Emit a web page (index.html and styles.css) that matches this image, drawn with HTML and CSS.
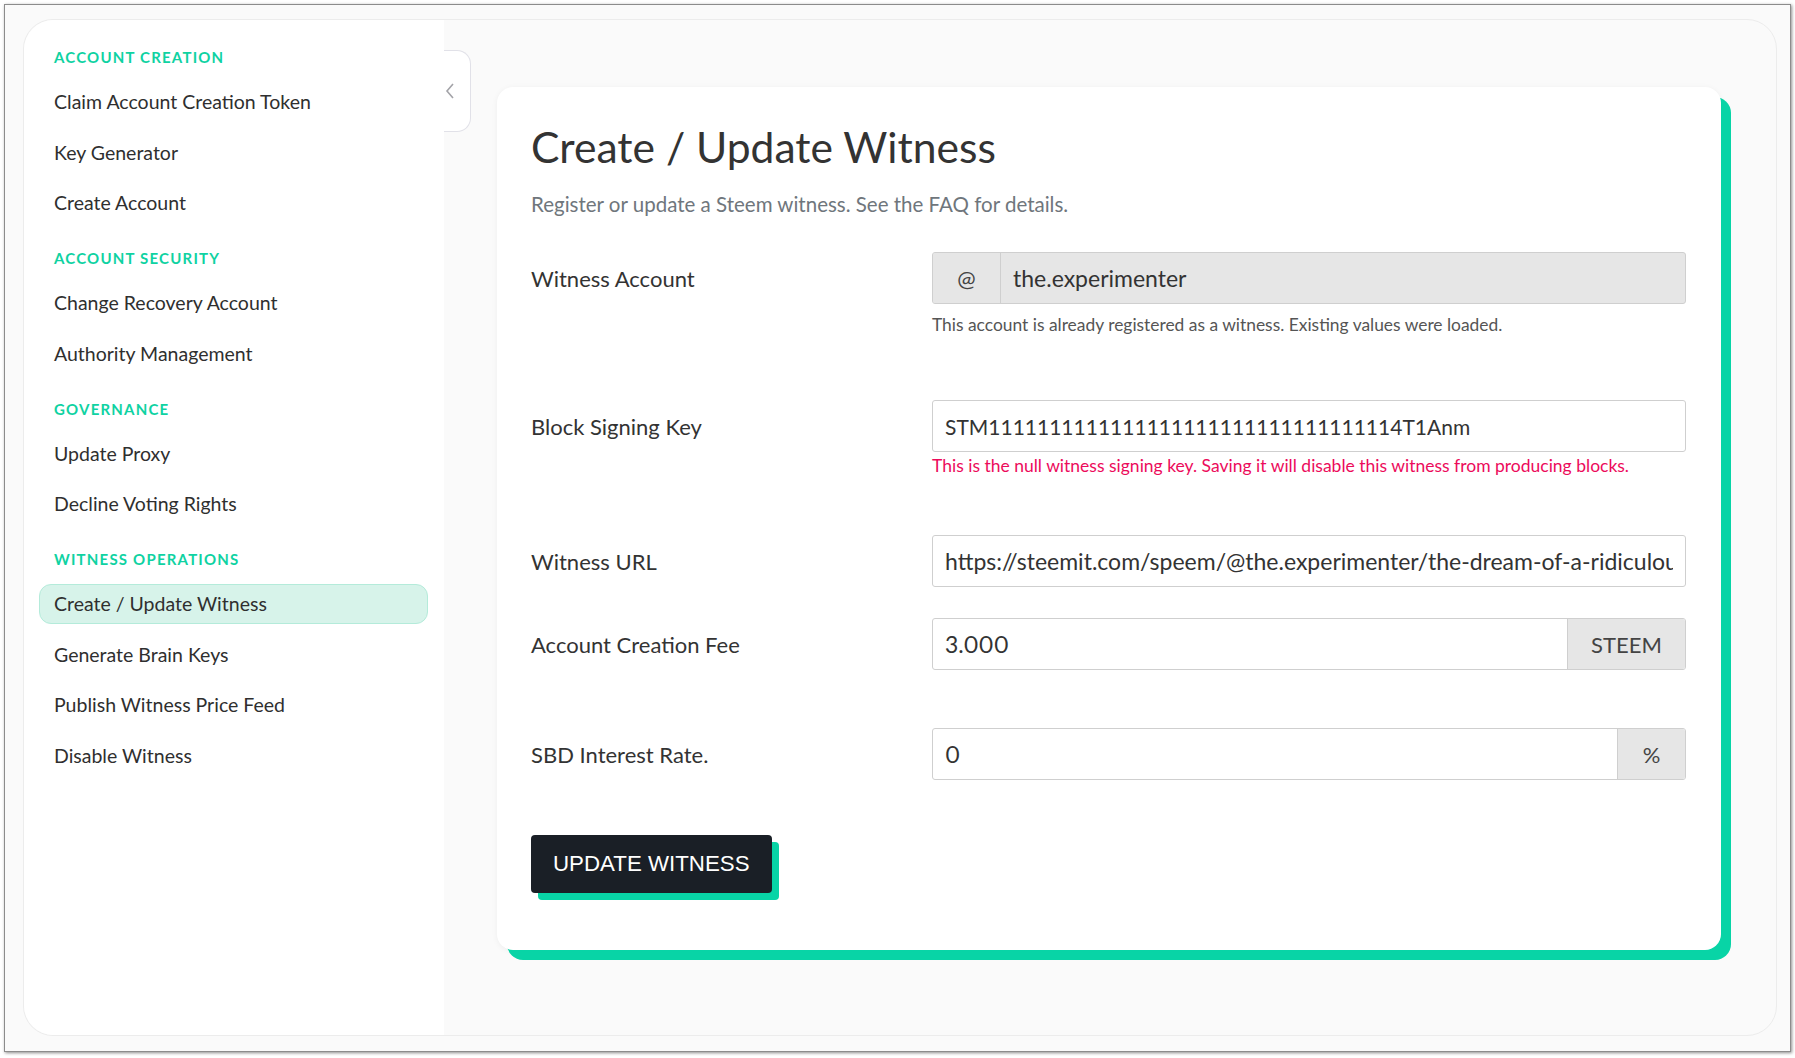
FILE: index.html
```html
<!DOCTYPE html>
<html lang="en">
<head>
    <meta charset="UTF-8">
    <meta name="viewport" content="width=device-width, initial-scale=1.0">
    <title>Create / Update Witness</title>
    <link rel="stylesheet" href="styles.css">
</head>
<body>
    <div class="frame">
        <div class="panel">
            <aside class="sidebar">
                <div class="nav-group">
                    <h4>Account Creation</h4>
                    <a href="#">Claim Account Creation Token</a>
                    <a href="#">Key Generator</a>
                    <a href="#">Create Account</a>
                </div>
                <div class="nav-group">
                    <h4>Account Security</h4>
                    <a href="#">Change Recovery Account</a>
                    <a href="#">Authority Management</a>
                </div>
                <div class="nav-group">
                    <h4>Governance</h4>
                    <a href="#">Update Proxy</a>
                    <a href="#">Decline Voting Rights</a>
                </div>
                <div class="nav-group">
                    <h4>Witness Operations</h4>
                    <a href="#" class="active">Create / Update Witness</a>
                    <a href="#">Generate Brain Keys</a>
                    <a href="#">Publish Witness Price Feed</a>
                    <a href="#">Disable Witness</a>
                </div>
                <button class="collapse" aria-label="Collapse sidebar">
                    <svg width="12" height="18" viewBox="0 0 12 18"><path d="M9 2 L3 9 L9 16" fill="none" stroke="#a3a3a8" stroke-width="1.6"/></svg>
                </button>
            </aside>

            <main class="main">
                <div class="card">
                    <h1>Create / Update Witness</h1>
                    <p class="lead">Register or update a Steem witness. See the FAQ for details.</p>

                    <div class="field">
                        <label>Witness Account</label>
                        <div class="input-group readonly">
                            <span class="addon">@</span>
                            <input type="text" value="the.experimenter" readonly>
                        </div>
                        <small class="hint">This account is already registered as a witness. Existing values were loaded.</small>
                    </div>

                    <div class="field">
                        <label>Block Signing Key</label>
                        <div class="input-group">
                            <input type="text" class="key" value="STM1111111111111111111111111111111114T1Anm">
                        </div>
                        <small class="hint error">This is the null witness signing key. Saving it will disable this witness from producing blocks.</small>
                    </div>

                    <div class="field tight">
                        <label>Witness URL</label>
                        <div class="input-group">
                            <input type="text" value="https://steemit.com/speem/@the.experimenter/the-dream-of-a-ridiculous-man">
                        </div>
                    </div>

                    <div class="field loose">
                        <label>Account Creation Fee</label>
                        <div class="input-group">
                            <input type="text" value="3.000">
                            <span class="addon addon-right wide">STEEM</span>
                        </div>
                    </div>

                    <div class="field">
                        <label>SBD Interest Rate.</label>
                        <div class="input-group">
                            <input type="text" value="0">
                            <span class="addon addon-right">%</span>
                        </div>
                    </div>

                    <button class="submit">UPDATE WITNESS</button>
                </div>
            </main>
        </div>
    </div>
</body>
</html>
```

FILE: styles.css
```css
* {
    margin: 0;
    padding: 0;
    box-sizing: border-box;
}

body {
    background: #fff;
    font-family: 'Lato', 'Open Sans', sans-serif;
    color: #333;
    overflow: hidden;
}

.frame {
    margin: 4px;
    height: 1048px;
    background: #fafafa;
    border: 1px solid #8c8c8c;
    box-shadow: 1px 1px 3px rgba(0, 0, 0, 0.45);
    padding: 14px 13px 15px 18px;
}

.panel {
    height: 100%;
    display: flex;
    border: 1px solid #ececec;
    border-radius: 30px;
    background: #fafafa;
}

/* sidebar */

.sidebar {
    position: relative;
    width: 420px;
    flex-shrink: 0;
    background: #fff;
    border-radius: 30px 0 0 30px;
    padding: 27px 16px 0 15px;
}

.nav-group {
    margin-bottom: 25px;
}

.nav-group h4 {
    font-size: 15px;
    line-height: 20px;
    font-weight: 700;
    letter-spacing: 1.2px;
    text-transform: uppercase;
    color: #0fd2a2;
    padding-left: 15px;
    margin-bottom: 15px;
}

.nav-group a {
    display: block;
    height: 40px;
    line-height: 38px;
    margin-bottom: 10.5px;
    padding-left: 14px;
    border: 1px solid transparent;
    border-radius: 12px;
    font-size: 19.5px;
    color: #2f2f2f;
    text-decoration: none;
}

.nav-group a.active {
    background: #d7f3ea;
    border-color: #b4ebda;
}

.collapse {
    position: absolute;
    top: 30px;
    right: -27px;
    width: 27px;
    height: 82px;
    background: #fff;
    border: 1px solid #e1e1e8;
    border-left: none;
    border-radius: 0 14px 14px 0;
    display: flex;
    align-items: center;
    justify-content: flex-start;
    padding-left: 0;
    cursor: pointer;
}

/* main */

.main {
    flex: 1;
    padding: 67px 55px 0 53px;
}

.card {
    background: #fff;
    border-radius: 16px;
    box-shadow: 10px 10px 0 #08d4a6, 0 1px 6px rgba(0, 0, 0, 0.05);
    padding: 33px 35px 57px 34px;
}

.card h1 {
    font-size: 42.6px;
    font-weight: 400;
    line-height: 54px;
    color: #333;
}

.lead {
    font-size: 20.5px;
    line-height: 28px;
    color: #6f767c;
    margin-top: 16px;
    margin-bottom: 34px;
}

.field {
    display: grid;
    grid-template-columns: 401px 1fr;
    margin-bottom: 55px;
}

.field.tight {
    margin-bottom: 31px;
}

.field.loose {
    margin-bottom: 58px;
}

.field label {
    grid-column: 1;
    grid-row: 1;
    align-self: center;
    font-size: 22px;
    color: #333;
}

.input-group {
    grid-column: 2;
    grid-row: 1;
    display: flex;
    height: 52px;
    border: 1px solid #cfcfcf;
    border-radius: 3px;
    background: #fff;
    overflow: hidden;
}

.input-group input {
    flex: 1;
    min-width: 0;
    border: none;
    outline: none;
    background: transparent;
    padding: 0 12px;
    font-family: inherit;
    font-size: 23px;
    font-variant-numeric: proportional-nums;
    color: #333;
}

.input-group input.key {
    font-size: 21px;
    font-variant-numeric: tabular-nums;
}

.input-group.readonly {
    background: #e6e6e6;
}

.addon {
    width: 68px;
    flex-shrink: 0;
    display: flex;
    align-items: center;
    justify-content: center;
    background: #e6e6e6;
    border-right: 1px solid #cfcfcf;
    font-size: 22px;
    color: #444;
}

.addon-right {
    border-right: none;
    border-left: 1px solid #cfcfcf;
}

.addon.wide {
    width: 118px;
}

.hint {
    grid-column: 2;
    grid-row: 2;
    display: block;
    font-size: 17.4px;
    line-height: 24px;
    color: #555;
    margin-top: 9px;
    margin-bottom: 8px;
}

.hint.error {
    color: #ec0b5b;
    font-size: 17.5px;
    margin-top: 2px;
    margin-bottom: 2px;
}

.submit {
    display: inline-block;
    height: 58px;
    padding: 0 22px;
    background: #1a1f26;
    color: #fff;
    border: none;
    border-radius: 4px;
    font-family: 'Liberation Sans', Arial, sans-serif;
    font-size: 22.3px;
    box-shadow: 7px 7px 0 #08d4a6;
    cursor: pointer;
}
```
